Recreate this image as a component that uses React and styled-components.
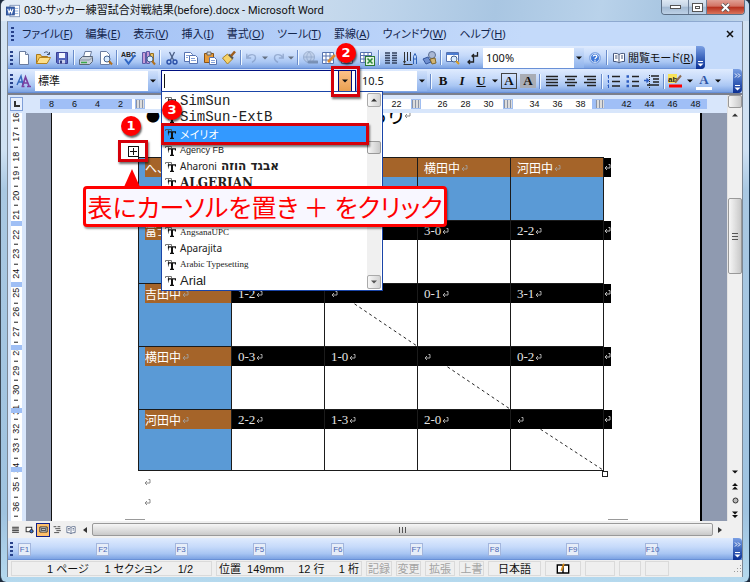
import React, { useState } from 'react';
import styled, { createGlobalStyle, css } from 'styled-components';

const GlobalStyle = createGlobalStyle`
  * {
    box-sizing: border-box;
  }
  body {
    margin: 0;
    background: #1d2a3c;
    font-family: 'Noto Sans', 'Noto Sans CJK JP', sans-serif;
    font-size: 11px;
    line-height: 16px;
    color: #111;
    font-feature-settings: 'palt';
  }
  button, input, select {
    font: inherit;
    color: inherit;
    font-feature-settings: inherit;
    margin: 0;
    padding: 0;
    border: 0;
    border-radius: 0;
    outline: 0;
    background: none;
  }
  svg {
    display: block;
  }
`;

const Window = styled.div`
  display: flex;
  flex-direction: column;
  height: 100vh;
  padding: 0 6px 5px;
  overflow: hidden;
  border-radius: 6px;
  border-left: 1px solid #3a4654;
  border-right: 1px solid #1d3a55;
  background: linear-gradient(180deg, #d3e3f2 0, #cfe1f3 150px, #a9c8e2 190px, #9fc3e0 88%, #b5d9ee 100%);
`;

const TitleBar = styled.header`
  flex: none;
  display: flex;
  justify-content: space-between;
  height: 21px;
  margin: 0 -6px;
  padding: 0 4px 0 5px;
  background: linear-gradient(100deg, #e4edf6 0%, #d5e3f1 30%, #bcd3ea 52%, #a9c6e2 66%, #b9d2ea 80%, #a6c4e0 90%, #c4d8ec 100%);
`;

const TitleText = styled.h1`
  display: flex;
  align-items: center;
  gap: 4px;
  margin: 0;
  font-family: Roboto, 'Noto Sans CJK JP', sans-serif;
  font-size: 11px;
  font-weight: 400;
  white-space: nowrap;
`;

const WindowButtons = styled.div`
  display: flex;
  align-self: flex-start;
  height: 15px;
  border: 1px solid #5c6f85;
  border-top: 0;
  border-radius: 0 0 4px 4px;
  overflow: hidden;
`;

const WindowButton = styled.button`
  display: flex;
  align-items: center;
  justify-content: center;
  width: ${(props) => (props.$close ? '38px' : props.$wide ? '26px' : '18px')};
  border-left: ${(props) => (props.$wide ? '0' : '1px solid #6d8098')};
  background: ${(props) =>
    props.$close
      ? 'linear-gradient(#e0a095 0, #d27263 45%, #b52e1c 50%, #d9745a 100%)'
      : 'linear-gradient(#dde8f3 0, #c4d4e6 45%, #a2b9d2 50%, #bdd1e6 100%)'};
`;

const Client = styled.main`
  flex: 1;
  display: flex;
  flex-direction: column;
  min-height: 0;
  border: 1px solid #7c8794;
  border-top-color: #8ea9d0;
  border-bottom: 0;
  background: #c4dafa;
`;

const Grip = styled.span`
  flex: none;
  width: 3px;
  height: 14px;
  background: repeating-linear-gradient(#27418a 0 2px, transparent 2px 4px);
`;

const MenuBar = styled.nav`
  flex: none;
  display: flex;
  align-items: center;
  gap: 13px;
  height: 24px;
  padding: 0 8px 0 3px;
  background: linear-gradient(90deg, #9ebef5, #c4dafa 70%);
`;

const MenuItem = styled.button`
  white-space: nowrap;
  color: #14264d;

  &:first-of-type {
    margin-left: -5px;
  }
  &:last-of-type {
    margin-left: auto;
  }
`;

const barFill = css`
  background: linear-gradient(#dfebfe 0, #c6dafa 40%, #a9c6f3 70%, #7fa5e4 94%, #5b84cf 100%);
`;

const ToolRow = styled.div`
  flex: none;
  display: flex;
  align-items: center;
  gap: 3px;
  height: ${(props) => (props.$tall ? '24px' : '23px')};
  width: ${(props) => (props.$tall ? '100%' : 'fit-content')};
  padding-left: 2px;
  border-radius: 0 4px 4px 0;
  ${barFill}
`;

const Tool = styled.button`
  flex: none;
  display: flex;
  align-items: center;
  justify-content: center;
  gap: 1px;
  height: 18px;
  opacity: ${(props) => (props.$off ? 0.5 : 1)};
  white-space: nowrap;
`;

const Separator = styled.span`
  flex: none;
  width: 2px;
  height: 15px;
  border-left: 1px solid #6a8ccb;
  border-right: 1px solid #f1f9ff;
`;

const Overflow = styled.button`
  flex: none;
  display: flex;
  flex-direction: column;
  align-items: center;
  justify-content: space-between;
  align-self: stretch;
  width: 9px;
  margin-left: ${(props) => (props.$end ? 'auto' : '0')};
  padding: 4px 0 2px;
  border-radius: 0 4px 4px 0;
  background: linear-gradient(#7a9fe3, #3d66bd 50%, #0b2f93);
`;

const Combo = styled.div`
  flex: none;
  position: relative;
  display: flex;
  width: ${(props) => props.$width};
  height: ${(props) => (props.$open ? '22px' : '20px')};
  background: #fff;
  border: ${(props) => (props.$open ? '1px solid #000f80' : '0')};
`;

const ComboSelect = styled.select`
  flex: 1;
  min-width: 0;
  padding-left: 3px;
  appearance: none;
`;

const ComboInput = styled.input`
  flex: 1;
  min-width: 0;
  padding-left: 4px;
`;

const ComboArrow = styled.span`
  flex: none;
  display: flex;
  align-items: center;
  justify-content: center;
  width: 10px;
  pointer-events: none;
  background: linear-gradient(#cfe0fb, #8fb3ec);
`;

const FontArrow = styled.button`
  flex: none;
  display: flex;
  align-items: center;
  justify-content: center;
  width: 14px;
  margin-right: 3px;
  border: 1px solid #000f80;
  border-width: 0 1px;
  background: linear-gradient(#fdc088, #e9a050);
`;

const Caret = styled.span`
  position: absolute;
  left: 2px;
  top: 3px;
  width: 1px;
  height: 14px;
  background: #111;
`;

const redFrame = css`
  border: 3px solid #d5000a;
  box-shadow: 1px 2px 2px rgba(0, 0, 0, 0.55);
`;

const ArrowMark = styled.span`
  position: absolute;
  z-index: 7;
  right: -5px;
  top: -5px;
  width: 29px;
  height: 31px;
  pointer-events: none;
  ${redFrame}
`;

const Badge = styled.span`
  position: absolute;
  z-index: 8;
  left: ${(props) => props.$left};
  top: ${(props) => props.$top};
  width: 20px;
  height: 20px;
  border-radius: 50%;
  background: #f00;
  box-shadow: 1px 2px 2px rgba(0, 0, 0, 0.6);
  color: #fff;
  font-family: 'DejaVu Sans', sans-serif;
  font-size: 13px;
  font-weight: 700;
  line-height: 20px;
  text-align: center;
`;

const FontPopup = styled.div`
  position: absolute;
  z-index: 5;
  left: -1px;
  top: 20px;
  display: flex;
  width: 222px;
  height: 200px;
  padding: 1px;
  border: 1px solid #1a45a8;
  background: #fff;
`;

const FontList = styled.ul`
  flex: 1;
  display: grid;
  grid-auto-rows: 1fr;
  margin: 0;
  padding: 0;
  list-style: none;
`;

const FontRow = styled.li`
  position: relative;
  display: flex;
  align-items: center;
  gap: 4px;
  min-height: 0;
  padding-left: 2px;
  white-space: nowrap;
  color: ${(props) => (props.$selected ? '#fff' : '#222')};
  background: ${(props) => (props.$selected ? '#3399ff' : 'none')};
  font-family: ${(props) => props.$family}, 'Noto Sans CJK JP', sans-serif;
  font-size: ${(props) => props.$size || '11px'};
  font-weight: ${(props) => (props.$bold ? 700 : 400)};
  line-height: 16px;
`;

const Hebrew = styled.b`
  font-family: 'DejaVu Sans', sans-serif;
  font-size: 12px;
`;

const RowMark = styled.span`
  position: absolute;
  z-index: 1;
  inset: -3px -2px -3px -2px;
  ${redFrame}
`;

const Track = styled.div`
  flex: none;
  display: flex;
  flex-direction: column;
  align-items: stretch;
  width: 14px;
  background: #f0f0f0;
`;

const ScrollButton = styled.button`
  flex: none;
  display: flex;
  align-items: center;
  justify-content: center;
  width: 14px;
  height: 14px;
  border: ${(props) => (props.$flat ? '0' : '1px solid #aaa')};
  border-radius: 2px;
  background: ${(props) => (props.$flat ? 'none' : 'linear-gradient(90deg, #f7f7f7, #d3d3d3)')};
`;

const Spacer = styled.span`
  flex: ${(props) => props.$grow};
`;

const Thumb = styled.span`
  flex: ${(props) => props.$grow || 'none'};
  display: flex;
  align-items: center;
  justify-content: center;
  min-height: 13px;
  border: 1px solid #999;
  border-radius: 2px;
  background: ${(props) =>
    props.$row ? 'linear-gradient(#f6f6f6, #e2e2e2 45%, #c9c9c9)' : 'linear-gradient(90deg, #f6f6f6, #e2e2e2 45%, #c9c9c9)'};
`;

const Workspace = styled.div`
  flex: 1;
  display: flex;
  min-height: 0;
  border-top: 2px solid #7b7f8c;
  background: #d8e6fb;
`;

const Sheet = styled.div`
  flex: 1;
  display: flex;
  flex-direction: column;
  min-width: 0;
`;

const Ruler = styled.div`
  flex: none;
  display: flex;
  align-items: center;
  height: 18px;
  padding-left: 2px;
`;

const Corner = styled.span`
  flex: none;
  display: flex;
  align-items: center;
  justify-content: center;
  width: 13px;
  height: 14px;
  margin-right: 17px;
  border: 1px solid #7f9fd8;
  background: #e8f0fd;
`;

const Tick = styled.span`
  flex: none;
  width: 23px;
  height: 10px;
  background: ${(props) => props.$fill};
  font-family: 'Liberation Sans', sans-serif;
  font-size: 9px;
  line-height: 10px;
  text-align: center;
`;

const ColumnMark = styled.i`
  display: block;
  width: 10px;
  height: 10px;
  margin-left: 3px;
  border: 1px solid #9fbdf0;
  background: repeating-linear-gradient(90deg, #8a93a5 0 1px, #dcdcdc 1px 3px);
`;

const SheetRow = styled.div`
  flex: 1;
  display: flex;
  min-height: 0;
`;

const SideRuler = styled.div`
  flex: none;
  position: relative;
  display: flex;
  flex-direction: column;
  width: 18px;
  border: solid #d8e6fb;
  border-width: 0 4px 0 3px;
  background: #fff;
  font-family: 'Liberation Sans', sans-serif;
  font-size: 9px;
  line-height: 11px;
`;

const SideTick = styled.span`
  flex: 1;
  display: flex;
  align-items: center;
  justify-content: center;
  min-height: 0;
  writing-mode: vertical-rl;
  transform: rotate(180deg);
`;

const SideDash = styled.i`
  width: 4px;
  height: 1px;
  background: #222;
`;

const SideMark = styled.i`
  position: absolute;
  left: 0;
  right: 0;
  top: ${(props) => props.$top};
  height: 5px;
  background: #9fbff5;
`;

const Desk = styled.div`
  flex: none;
  width: 25px;
  background: #8f9ab0;
`;

const Page = styled.article`
  flex: 1;
  position: relative;
  min-width: 0;
  padding-left: 86px;
  border-left: 1px solid #111;
  border-right: 2px solid #000;
  background: #fff;
  overflow: hidden;
`;

const Heading = styled.h2`
  display: flex;
  align-items: center;
  gap: 208px;
  height: 44px;
  margin: 0;
  padding: 0 0 40px 8px;
  color: #000;
  font-family: 'Noto Sans CJK JP', sans-serif;
  font-size: 20px;
  font-weight: 400;
  line-height: 20px;
  white-space: nowrap;

  span {
    display: flex;
    align-items: center;
  }
`;

const Bullet = styled.span`
  font-size: 14px;
`;

const TableArea = styled.div`
  position: relative;
  width: 473px;
`;

const Results = styled.table`
  width: 473px;
  table-layout: fixed;
  border-collapse: collapse;
`;

const Cell = styled.td`
  position: relative;
  width: ${(props) => (props.$end ? '8px' : '93px')};
  height: ${(props) => (props.$short ? '61px' : '63px')};
  padding: 0;
  vertical-align: top;
  text-align: left;
  font-weight: 400;
  border: ${(props) => (props.$end ? '0' : '1px solid #1b1b1b')};
  background: ${(props) => (props.$blue ? '#5a9ad6' : '#fff')};
`;

const Band = styled.div`
  position: relative;
  display: flex;
  align-items: center;
  gap: 1px;
  height: 19px;
  margin-left: ${(props) => (props.$inset ? '6px' : '0')};
  padding-left: ${(props) => (props.$inset || props.$end ? '0' : '6px')};
  background: ${(props) => (props.$brown ? '#a56429' : '#000')};
  color: ${(props) => (props.$brown ? '#fff' : '#e4e4e4')};
  font-family: ${(props) => (props.$brown ? "'Noto Sans CJK JP'" : "'Liberation Serif'")}, sans-serif;
  font-size: ${(props) => (props.$brown ? '12px' : '13px')};
  font-feature-settings: normal;
  white-space: nowrap;
`;

const Diagonal = styled.svg`
  position: absolute;
  inset: 0;
  width: 100%;
  height: 100%;
`;

const ResizeBox = styled.span`
  position: absolute;
  left: 464px;
  bottom: -6px;
  width: 6px;
  height: 6px;
  border: 1px solid #222;
  background: #fff;
`;

const MoveHandle = styled.button`
  position: absolute;
  left: -20px;
  top: -17px;
  display: flex;
  align-items: center;
  justify-content: center;
  width: 30px;
  height: 22px;
  ${redFrame}
`;

const Callout = styled.div`
  position: absolute;
  z-index: 6;
  left: -55px;
  top: 29px;
  width: 364px;
  height: 41px;
  border: 3px solid #f00;
  border-radius: 4px;
  background: #f8f7ff;
  box-shadow: 1px 2px 2px rgba(0, 0, 0, 0.4);
  color: #f00;
  font-family: 'Noto Sans CJK JP', sans-serif;
  font-size: 25px;
  font-weight: 400;
  line-height: 34px;
  text-align: center;
  white-space: nowrap;

  &::before {
    content: '';
    position: absolute;
    left: 38px;
    top: -20px;
    border: solid transparent;
    border-width: 0 8px 18px;
    border-bottom-color: #f00;
  }
`;

const Paragraphs = styled.div`
  display: grid;
  gap: 12px;
  padding: 7px 0 0 6px;
`;

const CropLine = styled.i`
  position: absolute;
  bottom: 1px;
  left: ${(props) => props.$left};
  width: 20px;
  height: 1px;
  background: #999;
`;

const SideScroll = styled(Track)`
  width: 15px;
  border-left: 1px solid #e3e3e3;
`;

const ViewBar = styled.div`
  flex: none;
  display: flex;
  align-items: center;
  height: 17px;
  padding: 0 15px 0 0;
  background: #f0f0f0;
`;

const ViewButton = styled.button`
  flex: none;
  display: flex;
  align-items: center;
  justify-content: center;
  width: 14px;
  height: 14px;
  border: ${(props) => (props.$on ? '1px solid #10208a' : '0')};
  background: ${(props) => (props.$on ? '#fdbf6b' : 'none')};
`;

const KeyBar = styled.div`
  flex: none;
  display: flex;
  align-items: center;
  height: 22px;
  padding-left: 2px;
  ${barFill}
`;

const Keys = styled.div`
  flex: 1;
  display: grid;
  grid-template-columns: repeat(9, 1fr);
  padding: 0 10px 0 5px;
`;

const Key = styled.button`
  width: 13px;
  height: 13px;
  border: 1px solid #a3b6dd;
  background: #e6edf8;
  color: #4a68b4;
  font-family: 'Liberation Sans', sans-serif;
  font-size: 8px;
  line-height: 11px;
  text-align: center;
`;

const StatusBar = styled.footer`
  flex: none;
  display: flex;
  align-items: center;
  gap: 4px;
  height: 17px;
  padding-left: 3px;
  background: #efefef;
  font-family: 'Liberation Sans', 'Noto Sans CJK JP', sans-serif;
`;

const Panel = styled.div`
  flex: none;
  display: flex;
  align-items: center;
  justify-content: ${(props) => (props.$spread ? 'space-between' : 'center')};
  width: ${(props) => props.$width};
  height: 15px;
  padding: ${(props) => props.$pad || '0'};
  border: 1px solid #dadada;
  color: ${(props) => (props.$off ? '#a3a3a3' : '#111')};
  white-space: nowrap;
`;

const SizeGrip = styled.span`
  margin-left: auto;
`;

const Down = ({ color = '#111' }) => (
  <svg width='6' height='4' viewBox='0 0 6 4'>
    <path d='M0 0.5h6L3 3.5z' fill={color} />
  </svg>
);

const Up = () => (
  <svg width='6' height='4' viewBox='0 0 6 4'>
    <path d='M0 3.5h6L3 0.5z' fill='#333' />
  </svg>
);

const Return = ({ color = '#8a8a8a' }) => (
  <svg width='7' height='8' viewBox='0 0 7 8' fill='none' stroke={color}>
    <path d='M4.5 1.5h1.5v3.5H1M3 3L1 5l2 2' />
  </svg>
);

const TrueType = ({ light }) => (
  <svg width='11' height='11' viewBox='0 0 11 11' fill='none'>
    <path d='M0.5 3V1.5h6V3M3.5 1.5v6' stroke={light ? '#456' : '#777'} />
    <path d='M3.5 5.5V3.8h7v1.7M5 10.3h4' stroke='#111' strokeWidth='1.2' />
    <path d='M7 4v6' stroke='#111' strokeWidth='2' />
  </svg>
);

const Chevrons = () => (
  <svg width='7' height='5' viewBox='0 0 7 5' fill='none' stroke='#fff'>
    <path d='M1 0.5l2 2-2 2M4 0.5l2 2-2 2' />
  </svg>
);

const OverflowDown = () => (
  <svg width='7' height='6' viewBox='0 0 7 6'>
    <path d='M1 0.5h5' stroke='#fff' />
    <path d='M0.5 2.5h6l-3 3z' fill='#fff' />
  </svg>
);

const magnifier = (
  <>
    <circle cx='10' cy='9' r='3' fill='#d9ecff' stroke='#44618f' />
    <path d='M12 11l3 3.5' stroke='#b07020' strokeWidth='2' />
  </>
);

const pageShape = <path d='M3.5 1.5h6l3 3v10h-9z' fill='#fff' stroke='#6b7da0' />;

const lines = (rows) => <path d={rows.map(([x, y, w]) => `M${x} ${y}h${w}`).join('')} stroke='#222' strokeWidth='1.4' />;

const drawings = {
  word: (
    <>
      <rect x='4.5' y='1.5' width='11' height='13' fill='#fff' stroke='#7d93b8' />
      <path d='M10 5h4M10 8h4M10 11h4' stroke='#7fa3d8' />
      <rect x='0.5' y='3.5' width='9' height='9' fill='#3b62ad' stroke='#274a8f' />
      <path d='M2 5.5l1.5 5L5 6.5l1.5 4L8 5.5' fill='none' stroke='#fff' strokeWidth='1.2' />
    </>
  ),
  new: (
    <>
      {pageShape}
      <path d='M9.5 1.5v3h3' fill='#dce6f5' stroke='#6b7da0' />
    </>
  ),
  open: (
    <>
      <path d='M1.5 13.5v-9h4l1 2h6v2' fill='#f3c55a' stroke='#a9781c' />
      <path d='M1.5 13.5l3-6h11l-3.5 6z' fill='#ffe08a' stroke='#b5831d' />
      <path d='M9 3c2-2 4-1 5 1M14.5 2v2.5H12' fill='none' stroke='#40546f' />
    </>
  ),
  save: (
    <>
      <path d='M2.5 2.5h11v11h-10l-1-1z' fill='#5566bd' stroke='#3a3f94' />
      <rect x='5' y='3' width='6' height='5' fill='#f3f6ff' />
      <rect x='5' y='10' width='6' height='3.5' fill='#c9d0ec' />
      <rect x='6' y='10.5' width='2' height='3' fill='#303a80' />
    </>
  ),
  print: (
    <>
      <path d='M5.5 7L7 1.5h6.5L12 7' fill='#fff' stroke='#6b7da0' />
      <path d='M1.5 9.5l3-3h10v5l-3 3h-10z' fill='#c8d0da' stroke='#5b6678' />
      <path d='M2 10h9.5l3-3' fill='none' stroke='#8792a5' />
      <path d='M3 12.5h6' stroke='#3ba84a' strokeWidth='1.5' />
    </>
  ),
  preview: (
    <>
      {pageShape}
      {magnifier}
    </>
  ),
  spell: (
    <>
      <text x='0' y='6.5' fontSize='7' fontWeight='700' fontFamily='Liberation Sans' fill='#222'>
        ABC
      </text>
      <path d='M4 9l3.5 4.5L14 5' fill='none' stroke='#2f66c4' strokeWidth='2' />
    </>
  ),
  research: (
    <>
      <path d='M2.5 2.5h3v11h-3zM6.5 1.5h3v12h-3z' fill='#c69bd6' stroke='#5c5ca8' />
      <path d='M10.5 3.5h3v8h-3z' fill='#e9c15c' stroke='#977023' />
      {magnifier}
    </>
  ),
  cut: (
    <>
      <path d='M5.5 2l4 8M10.5 2l-4 8' stroke='#4b5f85' strokeWidth='1.3' />
      <circle cx='5' cy='12' r='2' fill='none' stroke='#2b50a8' strokeWidth='1.4' />
      <circle cx='11' cy='12' r='2' fill='none' stroke='#2b50a8' strokeWidth='1.4' />
    </>
  ),
  copy: (
    <>
      <path d='M1.5 2.5h6l2 2v7h-8z' fill='#fff' stroke='#5673b0' />
      <path d='M6.5 5.5h6l2 2v6h-8z' fill='#fff' stroke='#5673b0' />
      <path d='M8 8.5h4M8 10.5h5M3 5.5h3M3 7.5h2' stroke='#85a1d8' />
    </>
  ),
  paste: (
    <>
      <path d='M2.5 3.5h9v9h-9z' fill='#e59a3a' stroke='#8a5314' />
      <path d='M5 2h4v3H5z' fill='#d8d8d8' stroke='#666' />
      <path d='M7.5 7.5h5l2 2v5h-7z' fill='#fff' stroke='#5673b0' />
      <path d='M9 10.5h4M9 12.5h4' stroke='#85a1d8' />
    </>
  ),
  painter: (
    <>
      <path d='M1.5 8l5-4 5 5-5 5z' fill='#f5d268' stroke='#a98026' />
      <path d='M8 4.5l4 4' stroke='#555' strokeWidth='2' />
      <path d='M10 6l4-4.5' stroke='#9d5d1c' strokeWidth='2.5' />
    </>
  ),
  undo: <path d='M2 3v5h5M2.5 7.5C5 3 12 3 12 8c0 3-2 4-4 5' fill='none' stroke='#6d84ae' strokeWidth='1.6' />,
  redo: <path d='M14 3v5H9M13.5 7.5C11 3 4 3 4 8c0 3 2 4 4 5' fill='none' stroke='#6d84ae' strokeWidth='1.6' />,
  link: (
    <>
      <circle cx='7' cy='7' r='5.5' fill='#b9c7dc' stroke='#7488a8' />
      <path d='M2 7h10M7 2c-3 3-3 7 0 10M7 2c3 3 3 7 0 10' fill='none' stroke='#7488a8' />
      <path d='M7 12h3m1 0h4' stroke='#4c5d78' strokeWidth='3' strokeLinecap='round' />
    </>
  ),
  tables: (
    <>
      <path d='M1.5 2.5h11v11h-11zM1.5 6h11M1.5 10h11M5 2.5v11M9 2.5v11' fill='#fff' stroke='#5673b0' />
      <path d='M7 12l7-7' stroke='#e08a2c' strokeWidth='2.5' />
    </>
  ),
  excel: (
    <>
      <path d='M1.5 2.5h11v10h-11zM1.5 5.5h11M1.5 9h11M5 2.5v10M9 2.5v10' fill='#fff' stroke='#5673b0' />
      <rect x='6.5' y='6.5' width='9' height='9' fill='#e3f4e2' stroke='#2b7a36' />
      <path d='M8.5 8.5l5 5M13.5 8.5l-5 5' stroke='#2b8a3a' strokeWidth='1.6' />
    </>
  ),
  columns: <path d='M2 3h5M2 5.5h5M2 8h5M2 10.5h5M2 13h5M9 3h5M9 5.5h5M9 8h5M9 10.5h5M9 13h5' stroke='#33415f' strokeWidth='1.5' />,
  textDir: (
    <>
      <path d='M2.5 2v9M5.5 2v9M8.5 2v9' stroke='#333' />
      <path d='M1 11h3l-1.5 3z' fill='#333' />
      <path d='M1.5 14.5h9' stroke='#333' />
      <path d='M11.5 14V6.5l1.5-3 1.5 3V14M11.5 9h3' fill='none' stroke='#2f62b8' />
    </>
  ),
  drawing: (
    <>
      <path d='M2 9l5-2 3 5-5 2z' fill='#6f8fd0' stroke='#34559a' />
      <circle cx='11' cy='5' r='3.5' fill='#a9b8d4' stroke='#5c6f93' />
      <path d='M9 9l5-1 1 5-4 1z' fill='#d3b573' stroke='#80672c' />
    </>
  ),
  map: (
    <>
      <path d='M1.5 2.5h12v9h-12z' fill='#fff' stroke='#5673b0' />
      <path d='M2 4h11' stroke='#4a7bd0' strokeWidth='2' />
      <circle cx='9' cy='9' r='3' fill='#d9ecff' stroke='#44618f' />
      <path d='M11 11l3 3' stroke='#d99b22' strokeWidth='2' />
    </>
  ),
  marks: (
    <>
      <path d='M13.5 2v4H8M10 4L8 6l2 2' fill='none' stroke='#222' strokeWidth='1.3' />
      <path d='M9.5 8v4H4M6 10l-2 2 2 2' fill='none' stroke='#222' strokeWidth='1.3' />
    </>
  ),
  help: (
    <>
      <circle cx='8' cy='8' r='5.5' fill='#3f78d8' stroke='#8fb0e6' />
      <circle cx='8' cy='8' r='4.5' fill='none' stroke='#fff' strokeWidth='0.7' />
      <path d='M6.2 6.5C6.5 4.5 10 4.7 9.8 6.7 9.7 7.8 8 7.9 8 9.2M8 10.3v1.2' fill='none' stroke='#fff' strokeWidth='1.3' />
    </>
  ),
  book: <path d='M8 4.5C6 3 4 3.5 2.5 3.5v8c2 0 4 0 5.5 1.5 1.5-1.5 3.5-1.5 5.5-1.5v-8C12 3.5 10 3 8 4.5v8M4 6h2.5M4 8h2.5M10 6h2M10 8h2' fill='#fff' stroke='#44557a' />,
  styles: (
    <>
      <path d='M1 12L5 3l2 9M2.5 9h4' fill='none' stroke='#3468bd' strokeWidth='1.4' />
      <path d='M6.5 13l3-9 3.5 9M8 10h4M5.5 13.5h3M11 13.5h4' fill='none' stroke='#7a3fa0' strokeWidth='1.7' />
    </>
  ),
  left: lines([[2, 3.5, 12], [2, 6.5, 12], [2, 9.5, 12], [2, 12.5, 12]]),
  center: lines([[2, 3.5, 12], [4, 6.5, 8], [2, 9.5, 12], [4, 12.5, 8]]),
  right: lines([[2, 3.5, 12], [5, 6.5, 9], [2, 9.5, 12], [5, 12.5, 9]]),
  numbers: (
    <>
      <path d='M2.5 2v3.5M2.5 7v3M2.5 11.5V15M1.5 3h1M1.5 8h1M1.5 12.5h1' stroke='#2c5cc0' />
      {lines([[6, 3.5, 8], [6, 8.5, 8], [6, 13, 8]])}
    </>
  ),
  bullets: (
    <>
      <path d='M1.5 3.5h2.5M1.5 8.5h2.5M1.5 13h2.5' stroke='#2c5cc0' strokeWidth='2.5' />
      {lines([[7, 3.5, 7], [7, 8.5, 7], [7, 13, 7]])}
    </>
  ),
  indent: (
    <>
      {lines([[7, 3, 8], [9, 6, 6], [9, 9, 6], [3, 12, 12]])}
      <path d='M5.5 2v13' stroke='#222' strokeDasharray='1 1' />
      <path d='M0 7.5h4M2.5 5.5l2 2-2 2' fill='none' stroke='#2c5cc0' strokeWidth='1.3' />
    </>
  ),
  highlight: (
    <>
      <rect x='0' y='1' width='9' height='9' fill='#f7e35a' />
      <text x='0' y='9' fontSize='8' fontWeight='700' fontFamily='Liberation Sans' fill='#222'>
        ab
      </text>
      <path d='M7 9.5l6-7' stroke='#8d6a50' strokeWidth='2' />
      <path d='M1 13h13' stroke='#f00' strokeWidth='3' />
    </>
  ),
  views1: <path d='M2 4h12M2 7h12M2 10h12M2 13h12' stroke='#222' strokeWidth='1.6' />,
  views2: (
    <>
      <rect x='2' y='4' width='10' height='8' fill='#fff' stroke='#222' strokeWidth='1.6' />
      <circle cx='11.500' cy='11' r='3' fill='#3d72cf' stroke='#222' strokeWidth='1.6' />
    </>
  ),
  views3: <path d='M1.5 3.5h13v9h-13zM5 6.5h6M5 9.5h6M4 5v6M12 5v6' fill='#fff' stroke='#222' strokeWidth='1.6' />,
  views4: <path d='M1 3h5M4 6.5h9M6 10h8M2 13.500h9M8 3h5' stroke='#444' strokeWidth='1.6' />,
  statusBook: (
    <>
      <path d='M1.5 3.5H7L8 5l1-1.5h5.500v9H1.500zM8 5v8' fill='#fff' stroke='#000' strokeWidth='1.6' />
      <path d='M6 10l3-8' stroke='#d98c1a' strokeWidth='2' />
    </>
  ),
};

const Icon = ({ name, width = 16, height = 16 }) => (
  <svg width={width} height={height} viewBox='0 0 16 16' fill='none'>
    {drawings[name]}
  </svg>
);

const Letter = styled.span`
  width: 16px;
  font-family: 'Liberation Serif', serif;
  font-size: 13px;
  font-weight: 700;
  font-style: ${(props) => (props.$italic ? 'italic' : 'normal')};
  text-decoration: ${(props) => (props.$underline ? 'underline' : 'none')};
  line-height: 14px;
  text-align: center;
  color: ${(props) => (props.$bar ? '#2f56a6' : '#111')};
  background: ${(props) => (props.$shade ? '#a9adb5' : 'none')};
  border: ${(props) => (props.$boxed ? '1px solid #444' : '0')};
  border-bottom: ${(props) => (props.$bar ? '3px solid #fff' : '')};
`;

const menus = [
  ['ファイル', 'F'],
  ['編集', 'E'],
  ['表示', 'V'],
  ['挿入', 'I'],
  ['書式', 'O'],
  ['ツール', 'T'],
  ['罫線', 'A'],
  ['ウィンドウ', 'W'],
  ['ヘルプ', 'H'],
];

const standardTools = [
  'new', 'open', 'save', '|', 'print', 'preview', '|', 'spell', 'research', '|', 'cut', 'copy', 'paste', 'painter', '|',
  'undo', 'v', 'redo', 'v', '|', 'link', 'tables', 'tables', 'excel', '|', 'columns', 'textDir', 'drawing', '|', 'map', 'marks',
];

const disabledTools = ['undo', 'redo', 'link'];

const fonts = [
  { name: 'SimSun', family: "'Liberation Mono'", size: '14px' },
  { name: 'SimSun-ExtB', family: "'Liberation Mono'", size: '14px' },
  { name: 'メイリオ', family: "'Noto Sans CJK JP'" },
  { name: 'Agency FB', family: "'Liberation Sans'", size: '9px' },
  { name: 'Aharoni', family: "'Noto Sans'", size: '10px', sample: 'אבגד הוזה' },
  { name: 'ALGERIAN', family: "'DejaVu Serif'", size: '12px', bold: true },
  { name: '', family: "'Noto Sans'" },
  { name: '', family: "'Noto Sans'" },
  { name: 'AngsanaUPC', family: "'Liberation Serif'", size: '9px' },
  { name: 'Aparajita', family: "'Noto Sans'", size: '10px' },
  { name: 'Arabic Typesetting', family: "'Liberation Serif'", size: '9px' },
  { name: 'Arial', family: "'Liberation Sans'", size: '13px' },
];

const rows = [
  ['へ、', '', '', '横田中', '河田中'],
  ['富士中', '', '', '3-0', '2-2'],
  ['吉田中', '1-2', '', '0-1', '3-1'],
  ['横田中', '0-3', '1-0', '', '0-2'],
  ['河田中', '2-2', '1-3', '2-0', ''],
];

const rulerTicks = [8, 6, 4, 2, 0];
for (let n = 2; n <= 48; n += 2) rulerTicks.push(n);
const rulerMarks = [4, 16, 20, 24];

const sideTicks = [];
for (let n = 16; n <= 36; n++) sideTicks.push(n, '-');

function ToolList({ names }) {
  return names.map((name, i) => {
    if (name === '|') return <Separator key={i} />;
    if (name === 'v') {
      return (
        <Tool key={i} aria-label='more' $off>
          <Down />
        </Tool>
      );
    }
    return (
      <Tool key={i} aria-label={name} $off={disabledTools.includes(name)}>
        <Icon name={name} width={name === 'undo' || name === 'redo' ? 14 : 16} />
      </Tool>
    );
  });
}

function SelectCombo({ label, width, value }) {
  return (
    <Combo $width={width}>
      <ComboSelect aria-label={label} defaultValue={value}>
        <option>{value}</option>
      </ComboSelect>
      <ComboArrow>
        <Down />
      </ComboArrow>
    </Combo>
  );
}

function FontCombo() {
  const [value, setValue] = useState('');
  const [selected, setSelected] = useState('メイリオ');

  return (
    <Combo $width='195px' $open>
      <ComboInput aria-label='フォント' value={value} onChange={(e) => setValue(e.target.value)} />
      <Caret />
      <FontArrow aria-label='フォント一覧'>
        <Down />
      </FontArrow>
      <ArrowMark />
      <Badge $left='174px' $top='-28px'>2</Badge>
      <FontPopup>
        <FontList role='listbox' aria-label='フォント一覧'>
          {fonts.map((font, i) => (
            <FontRow
              key={i}
              role='option'
              aria-selected={font.name === selected}
              $selected={font.name === selected}
              $family={font.family}
              $size={font.size}
              $bold={font.bold}
              onClick={() => setSelected(font.name)}
            >
              <TrueType light={font.name === selected} />
              {font.name}
              {font.sample && <Hebrew>{font.sample}</Hebrew>}
              {font.name === selected && <RowMark />}
            </FontRow>
          ))}
        </FontList>
        <Track>
          <ScrollButton aria-label='up'>
            <Up />
          </ScrollButton>
          <Spacer $grow={2} />
          <Thumb />
          <Spacer $grow={7} />
          <ScrollButton aria-label='down'>
            <Down color='#555' />
          </ScrollButton>
        </Track>
        <Badge $left='0' $top='8px'>3</Badge>
      </FontPopup>
    </Combo>
  );
}

function ResultTable() {
  return (
    <Results>
      <tbody>
        {rows.map((row, r) => (
          <tr key={r}>
            {row.map((text, c) => {
              const brown = r === 0 || c === 0;
              return (
                <Cell key={c} as={brown ? 'th' : 'td'} $blue={brown} $short={r === 4}>
                  {r === c && r > 1 && (
                    <Diagonal viewBox='0 0 93 63' preserveAspectRatio='none'>
                      <path d='M0 0L93 63' stroke='#222' strokeDasharray='3 3' />
                    </Diagonal>
                  )}
                  <Band $brown={brown} $inset={c === 0}>
                    {text}
                    <Return color={brown ? '#a39a92' : '#aaa'} />
                  </Band>
                </Cell>
              );
            })}
            <Cell $end $short={r === 4}>
              <Band $end>
                <Return color='#bbb' />
              </Band>
            </Cell>
          </tr>
        ))}
      </tbody>
    </Results>
  );
}

export default function App() {
  return (
    <>
      <GlobalStyle />
      <Window>
        <TitleBar>
          <TitleText>
            <Icon name='word' width={14} height={14} />
            030-サッカー練習試合対戦結果(before).docx - Microsoft Word
          </TitleText>
          <WindowButtons>
            <WindowButton aria-label='最小化' $wide>
              <svg width='11' height='5'><rect x='0.5' y='0.5' width='10' height='3' fill='#fff' stroke='#555' /></svg>
            </WindowButton>
            <WindowButton aria-label='最大化'>
              <svg width='11' height='9' fill='#fff' stroke='#555'>
                <rect x='0.5' y='0.5' width='10' height='8' />
                <rect x='3.5' y='3.5' width='4' height='2' />
              </svg>
            </WindowButton>
            <WindowButton aria-label='閉じる' $close>
              <svg width='11' height='9' fill='none'>
                <path d='M2 1l7 7M9 1L2 8' stroke='#555' strokeWidth='3.5' />
                <path d='M2 1l7 7M9 1L2 8' stroke='#fff' strokeWidth='2' />
              </svg>
            </WindowButton>
          </WindowButtons>
        </TitleBar>

        <Client>
          <MenuBar>
            <Grip />
            {menus.map(([label, key]) => (
              <MenuItem key={label}>
                {label}(<u>{key}</u>)
              </MenuItem>
            ))}
            <MenuItem aria-label='文書を閉じる'>
              <svg width='8' height='8'><path d='M1 1l6 6M7 1L1 7' stroke='#111' strokeWidth='1.5' /></svg>
            </MenuItem>
          </MenuBar>

          <ToolRow>
            <Grip />
            <ToolList names={standardTools} />
            <SelectCombo label='ズーム' width='101px' value='100%' />
            <ToolList names={['help', '|']} />
            <Tool>
              <Icon name='book' />
              <span>閲覧モード(<u>R</u>)</span>
            </Tool>
            <Overflow aria-label='その他'>
              <span />
              <OverflowDown />
            </Overflow>
          </ToolRow>

          <ToolRow $tall>
            <Grip />
            <ToolList names={['styles']} />
            <SelectCombo label='スタイル' width='123px' value='標準' />
            <FontCombo />
            <SelectCombo label='フォントサイズ' width='68px' value='10.5' />
            <Separator />
            <Tool><Letter>B</Letter></Tool>
            <Tool><Letter $italic>I</Letter></Tool>
            <Tool><Letter $underline>U</Letter></Tool>
            <Tool aria-label='下線の種類'><Down /></Tool>
            <Tool><Letter $boxed>A</Letter></Tool>
            <Tool><Letter $shade>A</Letter></Tool>
            <ToolList names={['|', 'left', 'center', 'right', '|', 'numbers', 'bullets', 'indent', '|', 'highlight']} />
            <Tool aria-label='蛍光ペンの色'><Down /></Tool>
            <Tool><Letter $bar>A</Letter></Tool>
            <Tool aria-label='文字の色'><Down /></Tool>
            <Overflow $end aria-label='その他'>
              <Chevrons />
              <OverflowDown />
            </Overflow>
          </ToolRow>

          <Workspace>
            <Sheet>
              <Ruler>
                <Corner>
                  <svg width='6' height='6'><path d='M1 0v5h5' fill='none' stroke='#333' strokeWidth='2' /></svg>
                </Corner>
                {rulerTicks.map((n, i) => (
                  <Tick key={i} $fill={i < 4 || i > 23 ? '#a0bff6' : '#fff'}>
                    {rulerMarks.includes(i) ? <ColumnMark /> : n}
                  </Tick>
                ))}
              </Ruler>
              <SheetRow>
                <SideRuler>
                  {sideTicks.map((n, i) => (
                    <SideTick key={i}>{n === '-' ? <SideDash /> : n}</SideTick>
                  ))}
                  {['108px', '169px', '232px', '295px', '354px'].map((top) => (
                    <SideMark key={top} $top={top} />
                  ))}
                </SideRuler>
                <Desk />
                <Page>
                  <Heading>
                    <Bullet>●</Bullet>
                    <span>おり<Return /></span>
                  </Heading>
                  <TableArea>
                    <ResultTable />
                    <ResizeBox />
                    <MoveHandle aria-label='表の移動ハンドル'>
                      <svg width='11' height='11' fill='#fff' stroke='#111'>
                        <rect x='0.5' y='0.5' width='10' height='10' />
                        <path d='M5.5 2v7M2 5.5h7' />
                      </svg>
                    </MoveHandle>
                    <Badge $left='-17px' $top='-41px'>1</Badge>
                    <Callout>表にカーソルを置き ＋ をクリック</Callout>
                  </TableArea>
                  <Paragraphs>
                    <Return />
                    <Return />
                  </Paragraphs>
                  <CropLine $left='73px' />
                  <CropLine $left='556px' />
                </Page>
                <Desk />
              </SheetRow>
            </Sheet>
            <SideScroll>
              <Thumb />
              <ScrollButton $flat aria-label='上へ'><Up /></ScrollButton>
              <Spacer $grow={77} />
              <Thumb $grow={75}>
                <svg width='6' height='7'><path d='M0 0.5h6M0 3.5h6M0 6.5h6' stroke='#555' /></svg>
              </Thumb>
              <Spacer $grow={193} />
              <ScrollButton $flat aria-label='下へ'><Down /></ScrollButton>
              <ScrollButton $flat aria-label='前のページ'>
                <svg width='6' height='7'><path d='M0 3l3-3 3 3zM0 6.5l3-3 3 3z' fill='#111' /></svg>
              </ScrollButton>
              <ScrollButton $flat aria-label='ジャンプ先の選択'>
                <svg width='7' height='7'><circle cx='3.5' cy='3.5' r='2.5' fill='#bbb' stroke='#333' /></svg>
              </ScrollButton>
              <ScrollButton $flat aria-label='次のページ'>
                <svg width='6' height='7'><path d='M0 0.5l3 3 3-3zM0 4l3 3 3-3z' fill='#111' /></svg>
              </ScrollButton>
            </SideScroll>
          </Workspace>

          <ViewBar>
            <ViewButton aria-label='下書き'><Icon name='views1' width={9} height={9} /></ViewButton>
            <ViewButton aria-label='Web レイアウト'><Icon name='views2' width={9} height={9} /></ViewButton>
            <ViewButton aria-label='印刷レイアウト' $on><Icon name='views3' width={9} height={9} /></ViewButton>
            <ViewButton aria-label='アウトライン'><Icon name='views4' width={9} height={9} /></ViewButton>
            <ViewButton aria-label='閲覧'><Icon name='book' width={12} height={12} /></ViewButton>
            <ScrollButton $flat aria-label='左へ'>
              <svg width='4' height='6'><path d='M4 0v6L0 3z' fill='#333' /></svg>
            </ScrollButton>
            <Thumb $row $grow={1}>
              <svg width='7' height='6'><path d='M0.5 0v6M3.5 0v6M6.5 0v6' stroke='#555' /></svg>
            </Thumb>
            <ScrollButton $flat aria-label='右へ'>
              <svg width='4' height='6'><path d='M0 0v6l4-3z' fill='#333' /></svg>
            </ScrollButton>
          </ViewBar>

          <KeyBar>
            <Grip />
            <Keys>
              {['F1', 'F2', 'F3', 'F5', 'F6', 'F7', 'F8', 'F9', 'F10'].map((key) => (
                <Key key={key}>{key}</Key>
              ))}
            </Keys>
            <Overflow $end aria-label='その他'>
              <Chevrons />
              <OverflowDown />
            </Overflow>
          </KeyBar>

          <StatusBar>
            <Panel $width='201px' $spread $pad='0 18px 0 35px'>
              <span>1 ページ</span>
              <span>1 セクション</span>
              <span>1/2</span>
            </Panel>
            <Panel $width='146px' $spread $pad='0 2px'>
              <span>位置&nbsp; 149mm</span>
              <span>12 行</span>
              <span>1 桁</span>
            </Panel>
            <Panel $width='26px' $off>記録</Panel>
            <Panel $width='25px' $off>変更</Panel>
            <Panel $width='30px' $off>拡張</Panel>
            <Panel $width='25px' $off>上書</Panel>
            <Panel $width='53px'>日本語</Panel>
            <Panel $width='36px'><Icon name='statusBook' width={14} height={14} /></Panel>
            <Panel $width='30px' />
            <Panel $width='22px' />
            <Panel $width='24px' />
            <SizeGrip>
              <svg width='9' height='9'><path d='M7 1h1v1H7zM4 4h1v1H4zM7 4h1v1H7zM1 7h1v1H1zM4 7h1v1H4zM7 7h1v1H7z' fill='#999' /></svg>
            </SizeGrip>
          </StatusBar>
        </Client>
      </Window>
    </>
  );
}
